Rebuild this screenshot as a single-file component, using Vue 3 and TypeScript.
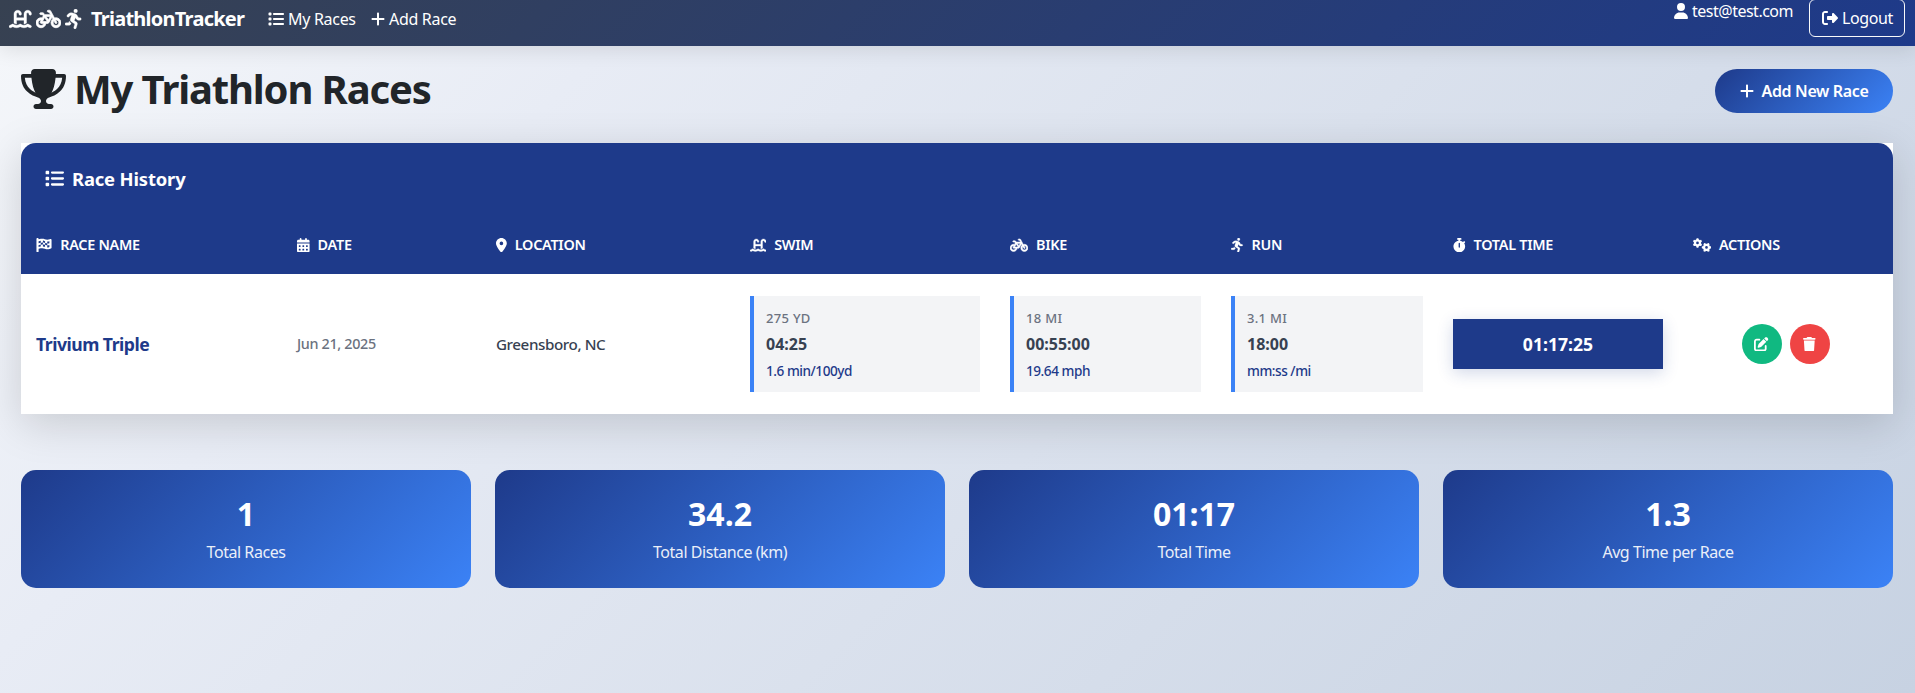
<script setup lang="ts">
import { h, type FunctionalComponent } from 'vue'

interface Glyph { w: number; d: string; second?: boolean; transform?: string; stroke?: number }

const glyphs: Record<string, Glyph> = {
  list: { w: 512, d: 'M40 48C26.7 48 16 58.7 16 72v48c0 13.3 10.7 24 24 24H88c13.3 0 24-10.7 24-24V72c0-13.3-10.7-24-24-24H40zM192 64c-17.7 0-32 14.3-32 32s14.3 32 32 32H480c17.7 0 32-14.3 32-32s-14.3-32-32-32H192zm0 160c-17.7 0-32 14.3-32 32s14.3 32 32 32H480c17.7 0 32-14.3 32-32s-14.3-32-32-32H192zm0 160c-17.7 0-32 14.3-32 32s14.3 32 32 32H480c17.7 0 32-14.3 32-32s-14.3-32-32-32H192zM16 232v48c0 13.3 10.7 24 24 24H88c13.3 0 24-10.7 24-24V232c0-13.3-10.7-24-24-24H40c-13.3 0-24 10.7-24 24zM40 368c-13.3 0-24 10.7-24 24v48c0 13.3 10.7 24 24 24H88c13.3 0 24-10.7 24-24V392c0-13.3-10.7-24-24-24H40z' },
  plus: { w: 448, d: 'M256 80c0-17.7-14.3-32-32-32s-32 14.3-32 32V224H48c-17.7 0-32 14.3-32 32s14.3 32 32 32H192V432c0 17.7 14.3 32 32 32s32-14.3 32-32V288H400c17.7 0 32-14.3 32-32s-14.3-32-32-32H256V80z' },
  user: { w: 448, d: 'M224 256A128 128 0 1 0 224 0a128 128 0 1 0 0 256zm-45.7 48C79.8 304 0 383.8 0 482.3C0 498.7 13.3 512 29.7 512H418.3c16.4 0 29.7-13.3 29.7-29.7C448 383.8 368.2 304 269.7 304H178.3z' },
  logout: { w: 512, d: 'M377.9 105.9L500.7 228.7c7.2 7.2 11.3 17.1 11.3 27.3s-4.1 20.1-11.3 27.3L377.9 406.1c-6.4 6.4-15 9.9-24 9.9c-18.7 0-33.9-15.2-33.9-33.9l0-62.1-128 0c-17.7 0-32-14.3-32-32l0-64c0-17.7 14.3-32 32-32l128 0 0-62.1c0-18.7 15.2-33.9 33.9-33.9c9 0 17.6 3.6 24 9.9zM160 96L96 96c-17.7 0-32 14.3-32 32l0 256c0 17.7 14.3 32 32 32l64 0c17.7 0 32 14.3 32 32s-14.3 32-32 32l-64 0c-53 0-96-43-96-96L0 128C0 75 43 32 96 32l64 0c17.7 0 32 14.3 32 32s-14.3 32-32 32z' },
  trophy: { w: 576, d: 'M400 0H176c-26.5 0-48.1 21.8-47.1 48.2c.2 5.3 .4 10.6 .7 15.8H24C10.7 64 0 74.7 0 88c0 92.6 33.5 157 78.5 200.7c44.3 43.1 98.3 64.8 138.1 75.8c23.4 6.5 39.4 26 39.4 45.6c0 20.9-17 37.9-37.9 37.9H192c-17.7 0-32 14.3-32 32s14.3 32 32 32H384c17.7 0 32-14.3 32-32s-14.3-32-32-32H357.9C337 448 320 431 320 410.1c0-19.6 15.9-39.2 39.4-45.6c39.9-11 93.9-32.7 138.2-75.8C542.5 245 576 180.6 576 88c0-13.3-10.7-24-24-24H446.4c.3-5.2 .5-10.4 .7-15.8C448.1 21.8 426.5 0 400 0zM48.9 112h84.4c9.1 90.1 29.2 150.3 51.9 190.6c-24.9-11-50.8-26.5-73.2-48.3c-32-31.1-58-76-63-142.3zM464.1 254.3c-22.4 21.8-48.3 37.3-73.2 48.3c22.7-40.3 42.8-100.5 51.9-190.6h84.4c-5.1 66.3-31.1 111.2-63 142.3z' },
  swim: { w: 576, stroke: 10, d: 'M128 127.7C128 74.9 170.9 32 223.7 32c48.3 0 89 36 95 83.9l1 8.2c2.2 17.5-10.2 33.5-27.8 35.7s-33.5-10.2-35.7-27.8l-1-8.2c-2-15.9-15.5-27.8-31.5-27.8c-17.5 0-31.7 14.2-31.7 31.7V224H384V127.7C384 74.9 426.9 32 479.7 32c48.3 0 89 36 95 83.9l1 8.2c2.2 17.5-10.2 33.5-27.8 35.7s-33.5-10.2-35.7-27.8l-1-8.2c-2-15.9-15.5-27.8-31.5-27.8c-17.5 0-31.7 14.2-31.7 31.7V361c-1.6 1-3.3 2-4.8 3.1c-18 12.4-40.1 20.3-59.2 20.3h0V288H192v96.5c-19 0-41.2-7.9-59.1-20.3c-1.6-1.1-3.2-2.2-4.9-3.1V127.7zM306.5 389.9C329 405.4 356.5 416 384 416c26.9 0 55.4-10.8 77.4-26.1l0 0c11.9-8.5 28.1-7.8 39.2 1.7c14.4 11.9 32.5 21 50.6 25.2c17.2 4 27.9 21.2 23.9 38.4s-21.2 27.9-38.4 23.9c-24.5-5.7-44.9-16.5-58.2-25C449.5 469.7 417 480 384 480c-31.9 0-60.6-9.9-80.4-18.9c-5.8-2.7-11.1-5.3-15.6-7.7c-4.5 2.4-9.7 5.1-15.6 7.7c-19.8 9-48.5 18.9-80.4 18.9c-33 0-65.5-10.3-94.5-25.8c-13.4 8.4-33.7 19.3-58.2 25c-17.2 4-34.4-6.7-38.4-23.9s6.7-34.4 23.9-38.4c18.1-4.2 36.2-13.3 50.6-25.2c11.1-9.4 27.3-10.1 39.2-1.7l0 0C136.7 405.2 165.1 416 192 416c27.5 0 55-10.6 77.5-26.1c11.1-7.9 25.9-7.9 37 0z' },
  bike: { w: 640, stroke: 18, d: 'M312 32c-13.3 0-24 10.7-24 24s10.7 24 24 24h25.7l34.6 64H222.9l-27.4-38C191 99.7 183.7 96 176 96H120c-13.3 0-24 10.7-24 24s10.7 24 24 24h43.7l22.1 30.7-26.6 53.1c-10-2.5-20.5-3.8-31.2-3.8C57.3 224 0 281.3 0 352s57.3 128 128 128c65.3 0 119.1-48.9 127-112h49c8.5 0 16.3-4.5 20.7-11.8l84.8-143.5 21.7 40.1C402.4 276.3 384 312 384 352c0 70.7 57.3 128 128 128s128-57.3 128-128s-57.3-128-128-128c-13.5 0-26.5 2.1-38.7 6L375.4 48.8C369.8 38.4 359 32 347.2 32H312zM458.6 303.7l32.3 59.7c6.3 11.7 20.9 16 32.5 9.7s16-20.9 9.7-32.5l-32.3-59.7c3.6-.6 7.4-.9 11.2-.9c39.8 0 72 32.2 72 72s-32.2 72-72 72s-72-32.2-72-72c0-18.6 7-35.5 18.6-48.3zM133.2 368h65c-7.3 32.1-36 56-70.2 56c-39.8 0-72-32.2-72-72s32.2-72 72-72c1.7 0 3.4 .1 5.1 .2l-24.2 48.5c-9 18.1 4.1 39.4 24.3 39.4zm33.7-48l50.7-101.3 72.9 101.2-.1 .1H166.8zm90.6-128H365.9L317 274.8 257.4 192z' },
  run: { w: 448, stroke: 8, d: 'M320 48a48 48 0 1 0 -96 0 48 48 0 1 0 96 0zM125.7 175.5c9.9-9.9 23.4-15.5 37.5-15.5c1.9 0 3.8 .1 5.6 .3L137.6 254c-9.3 28 1.7 58.8 26.8 74.5l86.2 53.9-25.4 88.8c-4.9 17 5 34.7 22 39.6s34.7-5 39.6-22l28.7-100.4c5.9-20.6-2.6-42.6-20.7-53.9L238 299l30.9-82.4 5.1 12.3C289 264.7 323.9 288 362.7 288H384c17.7 0 32-14.3 32-32s-14.3-32-32-32H362.7c-12.9 0-24.6-7.8-29.5-19.7l-6.3-15c-14.6-35.1-44.1-61.9-80.5-73.1l-48.7-15c-11.1-3.4-22.7-5.2-34.4-5.2c-31 0-60.8 12.3-82.7 34.3L57.4 153.4c-12.5 12.5-12.5 32.8 0 45.3s32.8 12.5 45.3 0l23.1-23.1zM91.2 352H32c-17.7 0-32 14.3-32 32s14.3 32 32 32h69.6c19 0 36.2-11.2 43.9-28.5L157 361.6l-9.5-6c-17.5-10.9-30.5-26.8-37.9-44.9L91.2 352z' },
  flag: { w: 576, transform: 'translate(16 0) scale(1.2 1)', d: 'M32 0C49.7 0 64 14.3 64 32V48l69-17.2c38.1-9.5 78.3-5.1 113.5 12.5c46.3 23.2 100.8 23.2 147.1 0l9.6-4.8C423.8 28.1 448 43.1 448 66.1V345.8c0 13.3-8.3 25.3-20.8 30l-34.7 13c-46.2 17.3-97.6 14.6-141.7-7.4c-37.9-19-81.3-23.7-122.5-13.4L64 384v96c0 17.7-14.3 32-32 32s-32-14.3-32-32V400 334 64 32C0 14.3 14.3 0 32 0zM64 187.1l64-13.9v65.5L64 252.6V318l48.8-12.2c5.1-1.3 10.1-2.4 15.2-3.3V238.7l38.9-8.4c8.3-1.8 16.7-2.5 25.1-2.1l0-64c13.6 .4 27.2 2.6 40.4 6.4l23.6 6.9v66.7l-41.7-12.3c-7.3-2.1-14.8-3.4-22.3-3.8v71.4c21.8 1.9 43.3 6.7 64 14.4V244.2l22.7 6.7c13.5 4 27.3 6.4 41.3 7.4V194c-7.8-.8-15.6-2.3-23.2-4.5l-40.8-12v-62c-13-3.8-25.8-8.8-38.2-15c-8.2-4.1-16.9-7-25.8-8.8v72.4c-13-.4-26 .8-38.7 3.6L128 173.2V98L64 114v73.1zM320 335.7c16.8 1.5 33.9-.7 50-6.8l14-5.2V251.9l-7.9 1.8c-18.4 4.3-37.3 5.7-56.1 4.5v77.4zm64-149.4V115.4c-20.9 6.1-42.4 9.1-64 9.1V194c13.9 1.4 28 .5 41.7-2.6l22.3-5.2z' },
  calendar: { w: 448, d: 'M128 0c17.7 0 32 14.3 32 32V64H288V32c0-17.7 14.3-32 32-32s32 14.3 32 32V64h48c26.5 0 48 21.5 48 48v48H0V112C0 85.5 21.5 64 48 64H96V32c0-17.7 14.3-32 32-32zM0 192H448V464c0 26.5-21.5 48-48 48H48c-26.5 0-48-21.5-48-48V192zm64 80v32c0 8.8 7.2 16 16 16h32c8.8 0 16-7.2 16-16V272c0-8.8-7.2-16-16-16H80c-8.8 0-16 7.2-16 16zm128 0v32c0 8.8 7.2 16 16 16h32c8.8 0 16-7.2 16-16V272c0-8.8-7.2-16-16-16H208c-8.8 0-16 7.2-16 16zm144-16c-8.8 0-16 7.2-16 16v32c0 8.8 7.2 16 16 16h32c8.8 0 16-7.2 16-16V272c0-8.8-7.2-16-16-16H336zM64 400v32c0 8.8 7.2 16 16 16h32c8.8 0 16-7.2 16-16V400c0-8.8-7.2-16-16-16H80c-8.8 0-16 7.2-16 16zm144-16c-8.8 0-16 7.2-16 16v32c0 8.8 7.2 16 16 16h32c8.8 0 16-7.2 16-16V400c0-8.8-7.2-16-16-16H208zm112 16v32c0 8.8 7.2 16 16 16h32c8.8 0 16-7.2 16-16V400c0-8.8-7.2-16-16-16H336c-8.8 0-16 7.2-16 16z' },
  pin: { w: 384, d: 'M215.7 499.2C267 435 384 279.4 384 192C384 86 298 0 192 0S0 86 0 192c0 87.4 117 243 168.3 307.2c12.3 15.3 35.1 15.3 47.4 0zM192 128a64 64 0 1 1 0 128 64 64 0 1 1 0-128z' },
  stopwatch: { w: 448, d: 'M176 0c-17.7 0-32 14.3-32 32s14.3 32 32 32h16V98.4C92.3 113.8 16 200 16 304c0 114.9 93.1 208 208 208s208-93.1 208-208c0-41.8-12.3-80.7-33.5-113.2l24.1-24.1c12.5-12.5 12.5-32.8 0-45.3s-32.8-12.5-45.3 0L355.7 143c-28.1-23-62.2-38.8-99.7-44.6V64h16c17.7 0 32-14.3 32-32s-14.3-32-32-32H224 176zm72 192V320c0 13.3-10.7 24-24 24s-24-10.7-24-24V192c0-13.3 10.7-24 24-24s24 10.7 24 24z' },
  gears: { w: 640, second: true, d: 'M308.5 135.3c7.1-6.3 9.9-16.2 6.2-25c-2.3-5.3-4.8-10.5-7.6-15.5L304 89.4c-3-5-6.3-9.9-9.8-14.6c-5.7-7.6-15.7-10.1-24.7-7.1l-28.2 9.3c-10.7-8.8-23-16-36.2-20.9L199 27.1c-1.9-9.3-9.1-16.7-18.5-17.8C173.9 8.4 167.2 8 160.4 8h-.7c-6.8 0-13.5 .4-20.1 1.2c-9.4 1.1-16.6 8.6-18.5 17.8L115 56.1c-13.3 5-25.5 12.1-36.2 20.9L50.5 67.8c-9-3-19-.5-24.7 7.1c-3.5 4.7-6.8 9.6-9.9 14.6l-3 5.3c-2.8 5-5.3 10.2-7.6 15.6c-3.7 8.7-.9 18.6 6.2 25l22.2 19.8C32.6 161.9 32 168.9 32 176s.6 14.1 1.7 20.9L11.5 216.7c-7.1 6.3-9.9 16.2-6.2 25c2.3 5.3 4.8 10.5 7.6 15.6l3 5.2c3 5.1 6.3 9.9 9.9 14.6c5.7 7.6 15.7 10.1 24.7 7.1l28.2-9.3c10.7 8.8 23 16 36.2 20.9l6.1 29.1c1.9 9.3 9.1 16.7 18.5 17.8c6.7 .8 13.5 1.2 20.4 1.2s13.7-.4 20.4-1.2c9.4-1.1 16.6-8.6 18.5-17.8l6.1-29.1c13.3-5 25.5-12.1 36.2-20.9l28.2 9.3c9 3 19 .5 24.7-7.1c3.5-4.7 6.8-9.5 9.8-14.6l3.1-5.4c2.8-5 5.3-10.2 7.6-15.5c3.7-8.7 .9-18.6-6.2-25l-22.2-19.8c1.1-6.8 1.7-13.8 1.7-20.9s-.6-14.1-1.7-20.9l22.2-19.8zM112 176a48 48 0 1 1 96 0 48 48 0 1 1 -96 0z' },
  edit: { w: 512, d: 'M471.6 21.7c-21.9-21.9-57.3-21.9-79.2 0L362.3 51.7l97.9 97.9 30.1-30.1c21.9-21.9 21.9-57.3 0-79.2L471.6 21.7zm-299.2 220c-6.1 6.1-10.8 13.6-13.5 21.9l-29.6 88.8c-2.9 8.6-.6 18.1 5.8 24.6s15.9 8.7 24.6 5.8l88.8-29.6c8.2-2.7 15.7-7.4 21.9-13.5L437.7 172.3 339.7 74.3 172.4 241.7zM96 64C43 64 0 107 0 160V416c0 53 43 96 96 96H352c53 0 96-43 96-96V320c0-17.7-14.3-32-32-32s-32 14.3-32 32v96c0 17.7-14.3 32-32 32H96c-17.7 0-32-14.3-32-32V160c0-17.7 14.3-32 32-32h96c17.7 0 32-14.3 32-32s-14.3-32-32-32H96z' },
  trash: { w: 448, d: 'M135.2 17.7L128 32H32C14.3 32 0 46.3 0 64S14.3 96 32 96H416c17.7 0 32-14.3 32-32s-14.3-32-32-32H320l-7.2-14.3C307.4 6.8 296.3 0 284.2 0H163.8c-12.1 0-23.2 6.8-28.6 17.7zM416 128H32L53.2 467c1.6 25.3 22.6 45 47.9 45H346.9c25.3 0 46.3-19.7 47.9-45L416 128z' },
}

const Icon: FunctionalComponent<{ name: string; size: number }> = (props) => {
  const g = glyphs[props.name]
  const paths = [h('path', { d: g.d, transform: g.transform, stroke: g.stroke ? 'currentColor' : undefined, 'stroke-width': g.stroke })]
  if (g.second) paths.push(h('path', { d: g.d, transform: 'translate(480 336) rotate(90) translate(-160 -176)' }))
  return h('svg', {
    viewBox: `0 0 ${g.w} 512`,
    width: (props.size * g.w) / 512,
    height: props.size,
    fill: 'currentColor',
    'aria-hidden': 'true',
  }, paths)
}
Icon.props = ['name', 'size']

const columns = [
  { icon: 'flag', label: 'RACE NAME' },
  { icon: 'calendar', label: 'DATE' },
  { icon: 'pin', label: 'LOCATION' },
  { icon: 'swim', label: 'SWIM' },
  { icon: 'bike', label: 'BIKE' },
  { icon: 'run', label: 'RUN' },
  { icon: 'stopwatch', label: 'TOTAL TIME' },
  { icon: 'gears', label: 'ACTIONS' },
]

const races = [
  {
    name: 'Trivium Triple',
    date: 'Jun 21, 2025',
    location: 'Greensboro, NC',
    legs: [
      { distance: '275 YD', time: '04:25', pace: '1.6 min/100yd' },
      { distance: '18 MI', time: '00:55:00', pace: '19.64 mph' },
      { distance: '3.1 MI', time: '18:00', pace: 'mm:ss /mi' },
    ],
    total: '01:17:25',
  },
]

const stats = [
  { value: '1', label: 'Total Races' },
  { value: '34.2', label: 'Total Distance (km)' },
  { value: '01:17', label: 'Total Time' },
  { value: '1.3', label: 'Avg Time per Race' },
]
</script>

<template>
  <div class="page">
    <nav class="navbar">
      <a class="brand">
        <span class="brand-icons">
          <Icon name="swim" :size="20" />
          <Icon name="bike" :size="20" />
          <Icon name="run" :size="20" />
        </span>
        <span class="brand-name">TriathlonTracker</span>
      </a>
      <a class="nav-link races-link"><Icon name="list" :size="16" /><span>My Races</span></a>
      <a class="nav-link"><Icon name="plus" :size="16" /><span>Add Race</span></a>
      <div class="account">
        <span class="user"><Icon name="user" :size="16" /><span>test@test.com</span></span>
        <a class="logout"><Icon name="logout" :size="16" /><span>Logout</span></a>
      </div>
    </nav>

    <main class="content">
      <header class="heading">
        <h1><Icon name="trophy" :size="40" /><span>My Triathlon Races</span></h1>
        <button class="add-race"><Icon name="plus" :size="16" /><span>Add New Race</span></button>
      </header>

      <section class="card">
        <h2 class="card-title"><Icon name="list" :size="19" /><span>Race History</span></h2>
        <div class="row head">
          <div v-for="c in columns" :key="c.label" class="cell th">
            <Icon :name="c.icon" :size="14.4" /><span>{{ c.label }}</span>
          </div>
        </div>
        <div v-for="r in races" :key="r.name" class="row body">
          <div class="cell"><span class="name">{{ r.name }}</span></div>
          <div class="cell"><span class="date">{{ r.date }}</span></div>
          <div class="cell"><span class="location">{{ r.location }}</span></div>
          <div v-for="leg in r.legs" :key="leg.distance" class="cell">
            <div class="leg">
              <div class="distance">{{ leg.distance }}</div>
              <div class="time">{{ leg.time }}</div>
              <div class="pace">{{ leg.pace }}</div>
            </div>
          </div>
          <div class="cell"><div class="total">{{ r.total }}</div></div>
          <div class="cell actions">
            <button class="round edit" aria-label="Edit"><Icon name="edit" :size="14.4" /></button>
            <button class="round delete" aria-label="Delete"><Icon name="trash" :size="14.4" /></button>
          </div>
        </div>
      </section>

      <section class="stats">
        <div v-for="s in stats" :key="s.label" class="stat">
          <div class="stat-value">{{ s.value }}</div>
          <div class="stat-label">{{ s.label }}</div>
        </div>
      </section>
    </main>
  </div>
</template>

<style>
body {
  margin: 0;
  overflow: hidden;
}
</style>

<style scoped>
.page {
  box-sizing: border-box;
  height: 693px;
  overflow: hidden;
  background: linear-gradient(135deg, #f5f7fa 0%, #e8ecf5 25%, #c7d2e2 100%);
  font-family: "Segoe UI", "Noto Sans", "Open Sans", sans-serif;
  font-size: 16px;
  line-height: 24px;
  color: #212529;
}
svg {
  display: block;
  flex: none;
}
span {
  white-space: nowrap;
}
.navbar {
  box-sizing: border-box;
  height: 46px;
  padding: 0 10px 0 9px;
  display: flex;
  align-items: center;
  position: relative;
  background: linear-gradient(135deg, #374151 0%, #1e3a8a 100%);
  box-shadow: 0 4px 20px rgba(0, 0, 0, 0.1);
  color: #fff;
}
.brand {
  display: flex;
  align-items: center;
  height: 38px;
  margin-bottom: 8px;
}
.brand-icons {
  display: flex;
  gap: 4px;
}
.brand-name {
  margin-left: 9px;
  width: 154px;
  font-size: 20px;
  font-weight: 700;
  letter-spacing: -0.75px;
}
.nav-link {
  display: flex;
  align-items: center;
  gap: 4px;
  margin-bottom: 9px;
  letter-spacing: -0.3px;
}
.races-link {
  width: 87px;
  margin-left: 23px;
  margin-right: 16px;
}
.account {
  margin-left: auto;
  height: 46px;
  display: flex;
  align-items: flex-start;
}
.user {
  display: flex;
  align-items: center;
  gap: 4px;
  margin-top: -1px;
  margin-right: 16px;
  letter-spacing: -0.5px;
}
.logout {
  box-sizing: border-box;
  width: 96px;
  height: 38px;
  margin-top: -1px;
  padding: 0 12px 1px;
  border: 1px solid #f8f9fa;
  border-radius: 6px;
  display: flex;
  align-items: center;
  gap: 4px;
  letter-spacing: -0.4px;
}
.content {
  padding: 22px 22px 0 21px;
}
.heading {
  height: 46px;
  display: flex;
  align-items: center;
  justify-content: space-between;
}
h1 {
  margin: 0 0 5px;
  display: flex;
  align-items: center;
  gap: 8px;
  font-size: 40px;
  line-height: 48px;
  font-weight: 700;
  letter-spacing: -1.15px;
}
.add-race {
  box-sizing: border-box;
  width: 178px;
  height: 44px;
  padding: 0;
  border: 0;
  border-radius: 22px;
  display: flex;
  align-items: center;
  justify-content: center;
  gap: 8px;
  background: linear-gradient(135deg, #1e3a8a 0%, #3b82f6 100%);
  font: inherit;
  font-weight: 600;
  letter-spacing: -0.35px;
  color: #fff;
}
.card {
  margin-top: 29px;
  background: #fff;
  box-shadow: 0 10px 40px rgba(0, 0, 0, 0.15);
}
.card-title {
  box-sizing: border-box;
  height: 73px;
  margin: 0;
  padding: 0 24px 2px;
  display: flex;
  align-items: center;
  gap: 8px;
  border-radius: 15px 15px 0 0;
  background: #1e3a8a;
  color: #fff;
  font-size: 18.4px;
  font-weight: 700;
  letter-spacing: -0.15px;
}
.row {
  display: grid;
  grid-template-columns: 261px 199px 254px 260px 221px 222px 240px 215px;
}
.head {
  height: 58px;
  background: #1e3a8a;
  color: #fff;
}
.body {
  height: 140px;
}
.cell {
  box-sizing: border-box;
  padding: 0 15px;
  display: flex;
  align-items: center;
}
.th {
  gap: 8px;
  font-size: 14.4px;
  font-weight: 600;
  letter-spacing: -0.27px;
}
.name {
  font-size: 17.6px;
  font-weight: 700;
  letter-spacing: -0.5px;
  color: #1e3a8a;
}
.date {
  font-size: 14.4px;
  font-weight: 500;
  letter-spacing: -0.35px;
  color: #6b7280;
}
.location {
  font-size: 15.2px;
  font-weight: 500;
  letter-spacing: -0.42px;
  color: #374151;
}
.leg {
  box-sizing: border-box;
  width: 100%;
  height: 96px;
  padding: 9px 12px;
  border-left: 4px solid #3b82f6;
  background: #f3f4f6;
}
.distance {
  font-size: 13px;
  line-height: 26px;
  font-weight: 500;
  letter-spacing: 0.3px;
  color: #6b7280;
}
.time {
  font-size: 16px;
  line-height: 27px;
  font-weight: 700;
  color: #374151;
}
.pace {
  font-size: 13.6px;
  line-height: 26px;
  font-weight: 500;
  letter-spacing: -0.47px;
  color: #1e3a8a;
}
.total {
  width: 100%;
  height: 50px;
  line-height: 50px;
  text-align: center;
  background: #1e3a8a;
  box-shadow: 0 4px 15px rgba(30, 58, 138, 0.2);
  color: #fff;
  font-size: 17.6px;
  font-weight: 700;
}
.actions {
  justify-content: center;
  gap: 8px;
}
.round {
  width: 40px;
  height: 40px;
  padding: 0;
  border: 0;
  border-radius: 50%;
  display: flex;
  align-items: center;
  justify-content: center;
  color: #fff;
}
.edit {
  background: #10b981;
}
.delete {
  background: #ef4444;
}
.stats {
  margin-top: 56px;
  display: grid;
  grid-template-columns: repeat(4, 1fr);
  gap: 24px;
}
.stat {
  box-sizing: border-box;
  height: 118px;
  padding-top: 20px;
  border-radius: 15px;
  background: linear-gradient(135deg, #1e3a8a 0%, #3b82f6 100%);
  text-align: center;
  color: #fff;
}
.stat-value {
  font-size: 32px;
  line-height: 48px;
  font-weight: 700;
}
.stat-label {
  margin-top: 2px;
  letter-spacing: -0.45px;
  opacity: 0.9;
}
</style>
